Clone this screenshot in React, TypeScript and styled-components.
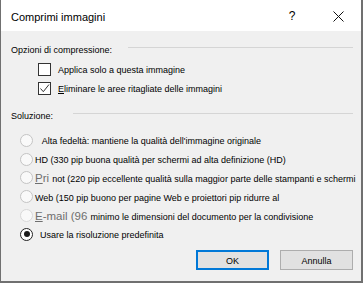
import React from "react";
import styled, { createGlobalStyle } from "styled-components";

const Global = createGlobalStyle`
  html, body { margin: 0; padding: 0; }
  body {
    background: #707070;
    font-family: "Liberation Sans", Arial, sans-serif;
    width: 363px;
    height: 283px;
    overflow: hidden;
  }
  #root { padding-left: 1px; }
`;

const Dialog = styled.div`
  width: 360px;
  height: 281px;
  background: #f0f0f0;
  display: flex;
  flex-direction: column;
`;

const TitleBar = styled.div`
  height: 31px;
  background: #ffffff;
  display: flex;
  align-items: center;
  flex-shrink: 0;
`;

const Title = styled.div`
  flex: 1;
  padding-left: 10px;
  padding-top: 2px;
  font-size: 11px;
  color: #000;
`;

const TitleButton = styled.div`
  width: 46px;
  height: 31px;
  display: flex;
  align-items: center;
  justify-content: center;
  font-size: 12px;
  color: #000;
  padding-top: 1px;
  box-sizing: border-box;
`;

const Body = styled.div`
  flex: 1;
  display: flex;
  flex-direction: column;
  padding: 13.5px 8px 11px 10px;
`;

const SectionHeader = styled.div<{ $gap: number; $mb: number }>`
  display: flex;
  align-items: flex-start;
  font-size: 9px;
  line-height: 11px;
  height: 11px;
  color: #000;
  margin-bottom: ${(p) => p.$mb}px;
  & > span { white-space: nowrap; }
  &::after {
    content: "";
    flex: 1;
    height: 1px;
    background: #d5d5d5;
    margin-top: 2px;
    margin-left: ${(p) => p.$gap}px;
  }
`;

const CheckList = styled.div`
  display: flex;
  flex-direction: column;
  gap: 6px;
  padding-left: 27px;
  margin-bottom: 15.5px;
`;

const CheckRow = styled.div`
  display: flex;
  align-items: flex-start;
  height: 13px;
`;

const Box = styled.div`
  width: 13px;
  height: 13px;
  box-sizing: border-box;
  border: 1px solid #333;
  background: #fff;
  flex-shrink: 0;
  position: relative;
  & svg { position: absolute; left: -1px; top: -1px; }
`;

const Label = styled.span<{ $ml: number }>`
  font-size: 9px;
  line-height: 13px;
  margin-left: ${(p) => p.$ml}px;
  margin-top: 1px;
  color: #000;
  white-space: nowrap;
`;

const Key = styled.span`
  text-decoration: underline;
  text-underline-offset: 1px;
`;

const Dim = styled.span`
  font-size: 11.5px;
  color: #6e6e6e;
`;

const RadioList = styled.div`
  display: flex;
  flex-direction: column;
  padding-left: 9px;
  margin-top: 9.5px;
`;

const RadioRow = styled.div`
  display: flex;
  align-items: center;
  height: 18.8px;
`;

const Circle = styled.div<{ $checked?: boolean; $faint?: boolean }>`
  width: 13px;
  height: 13px;
  box-sizing: border-box;
  border-radius: 50%;
  flex-shrink: 0;
  border: 1px solid ${(p) => (p.$checked ? "#222" : p.$faint ? "#d8d8d8" : "#c4c4c4")};
  background: ${(p) => (p.$checked ? "#fff" : "#f9f9f9")};
  display: flex;
  align-items: center;
  justify-content: center;
  &::after {
    content: "";
    display: ${(p) => (p.$checked ? "block" : "none")};
    width: 6px;
    height: 6px;
    border-radius: 50%;
    background: #1a1a1a;
  }
`;

const RadioLabel = styled.span<{ $ml: number }>`
  font-size: 9px;
  line-height: 13px;
  margin-left: ${(p) => p.$ml}px;
  margin-top: 3px;
  color: #000;
  white-space: nowrap;
`;

const ButtonRow = styled.div`
  margin-top: auto;
  display: flex;
  justify-content: flex-end;
  gap: 11px;
`;

const Button = styled.div<{ $primary?: boolean }>`
  width: 73px;
  height: 20px;
  box-sizing: border-box;
  background: #e1e1e1;
  border: ${(p) => (p.$primary ? "2px solid #0078d7" : "1px solid #adadad")};
  display: flex;
  align-items: center;
  justify-content: center;
  font-size: 9px;
  color: #000;
  padding-top: 2px;
`;

const radios: { ml: number; content: React.ReactNode; checked?: boolean; faint?: boolean }[] = [
  { ml: 8.7, content: "Alta fedeltà: mantiene la qualità dell'immagine originale" },
  { ml: 2, content: "HD (330 pip buona qualità per schermi ad alta definizione (HD)" },
  {
    ml: 2,
    content: (
      <>
        <Dim>
          <Key>P</Key>ri{" "}
        </Dim>
        not (220 pip eccellente qualità sulla maggior parte delle stampanti e schermi
      </>
    ),
  },
  { ml: 2, content: "Web (150 pip buono per pagine Web e proiettori pip ridurre al" },
  {
    ml: 2,
    faint: true,
    content: (
      <>
        <Dim>
          <Key>E</Key>-mail (96{" "}
        </Dim>
        minimo le dimensioni del documento per la condivisione
      </>
    ),
  },
  { ml: 7, checked: true, content: "Usare la risoluzione predefinita" },
];

export default function App() {
  return (
    <>
      <Global />
      <Dialog>
        <TitleBar>
          <Title>Comprimi immagini</Title>
          <TitleButton>?</TitleButton>
          <TitleButton>
            <svg width="11" height="11" viewBox="0 0 11 11">
              <path d="M0.5 0.5 L10.5 10.5 M10.5 0.5 L0.5 10.5" stroke="#111" strokeWidth="1" fill="none" />
            </svg>
          </TitleButton>
        </TitleBar>
        <Body>
          <SectionHeader $gap={16} $mb={7.5}>
            <span>Opzioni di compressione:</span>
          </SectionHeader>
          <CheckList>
            <CheckRow>
              <Box />
              <Label $ml={7}>Applica solo a questa immagine</Label>
            </CheckRow>
            <CheckRow>
              <Box>
                <svg width="13" height="13" viewBox="0 0 13 13">
                  <path d="M2.5 6.5 L5.3 9.7 L11 2.5" stroke="#333" strokeWidth="1" fill="none" />
                </svg>
              </Box>
              <Label $ml={7}>
                <Key>E</Key>liminare le aree ritagliate delle immagini
              </Label>
            </CheckRow>
          </CheckList>
          <SectionHeader $gap={20} $mb={0}>
            <span>Soluzione:</span>
          </SectionHeader>
          <RadioList>
            {radios.map((r, i) => (
              <RadioRow key={i}>
                <Circle $checked={r.checked} $faint={r.faint} />
                <RadioLabel $ml={r.ml}>{r.content}</RadioLabel>
              </RadioRow>
            ))}
          </RadioList>
          <ButtonRow>
            <Button $primary>OK</Button>
            <Button>Annulla</Button>
          </ButtonRow>
        </Body>
      </Dialog>
    </>
  );
}
